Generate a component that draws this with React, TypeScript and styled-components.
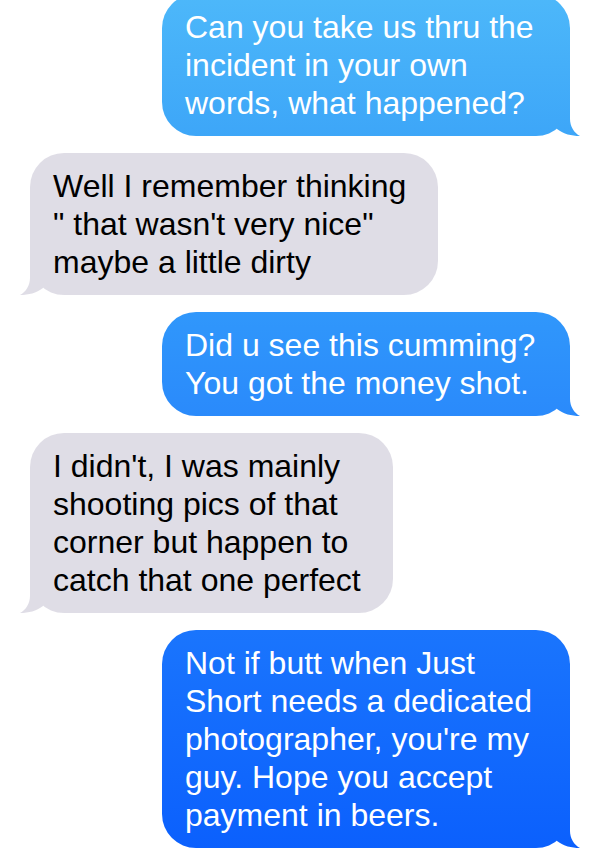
import React, { useId } from 'react';
import styled, { createGlobalStyle } from 'styled-components';

const LINE = 38;
const PAD = 14;
const TAIL = 40;

const Global = createGlobalStyle`
  * { box-sizing: border-box; }
  body {
    margin: 0;
    background: #fff;
    font-family: "Liberation Sans", Arial, sans-serif;
    overflow-x: hidden;
  }
`;

const Thread = styled.main`
  display: flex;
  flex-direction: column;
  gap: 17px;
  margin-top: -6px;
  padding: 0 30px 4px;
`;

const Bubble = styled.article<{ $sent: boolean; $from: string; $to: string; $width: string }>`
  position: relative;
  align-self: ${(p) => (p.$sent ? 'flex-end' : 'flex-start')};
  width: ${(p) => p.$width};
  min-width: max-content;
  padding: ${PAD}px 23px;
  border-radius: 34px;
  background: linear-gradient(${(p) => p.$from}, ${(p) => p.$to});
  color: ${(p) => (p.$sent ? '#fff' : '#000')};
  font-size: 32px;
  line-height: ${LINE}px;
`;

const Line = styled.span`
  display: block;
  white-space: nowrap;
`;

const TailShape = styled.svg<{ $sent: boolean }>`
  position: absolute;
  bottom: 0;
  ${(p) => (p.$sent ? 'right: -10px;' : 'left: -10px; transform: scaleX(-1);')}
`;

type Message = { sent: boolean; from: string; to: string; width: string; lines: string[] };

const GRAY = '#dfdde6';
const WIDE = '68vw';
const NARROW = '60.5vw';

const messages: Message[] = [
  { sent: true, from: '#4db8fa', to: '#3da6f8', width: WIDE, lines: ['Can you take us thru the', 'incident in your own', 'words, what happened?'] },
  { sent: false, from: GRAY, to: GRAY, width: WIDE, lines: ['Well I remember thinking', '" that wasn\'t very nice"', 'maybe a little dirty'] },
  { sent: true, from: '#3097fb', to: '#2a8afb', width: WIDE, lines: ['Did u see this cumming?', 'You got the money shot.'] },
  { sent: false, from: GRAY, to: GRAY, width: NARROW, lines: ["I didn't, I was mainly", 'shooting pics of that', 'corner but happen to', 'catch that one perfect'] },
  { sent: true, from: '#1a75fd', to: '#0b60fd', width: WIDE, lines: ['Not if butt when Just', 'Short needs a dedicated', "photographer, you're my", 'guy. Hope you accept', 'payment in beers.'] },
];

function Tail({ message }: { message: Message }) {
  const id = useId();
  const bubbleHeight = message.lines.length * LINE + PAD * 2;
  return (
    <TailShape $sent={message.sent} width={TAIL} height={TAIL} viewBox="0 0 40 40" aria-hidden="true">
      <linearGradient id={id} gradientUnits="userSpaceOnUse" x1="0" x2="0" y1={TAIL - bubbleHeight} y2={TAIL}>
        <stop offset="0" stopColor={message.from} />
        <stop offset="1" stopColor={message.to} />
      </linearGradient>
      <path d="M30 4V23C30 30 34 37 40 40C31 40 24 38 17 33L10 20Z" fill={`url(#${id})`} />
    </TailShape>
  );
}

export default function App() {
  return (
    <>
      <Global />
      <Thread>
        {messages.map((m) => (
          <Bubble key={m.lines[0]} $sent={m.sent} $from={m.from} $to={m.to} $width={m.width}>
            {m.lines.map((l) => (
              <Line key={l}>{l}</Line>
            ))}
            <Tail message={m} />
          </Bubble>
        ))}
      </Thread>
    </>
  );
}
